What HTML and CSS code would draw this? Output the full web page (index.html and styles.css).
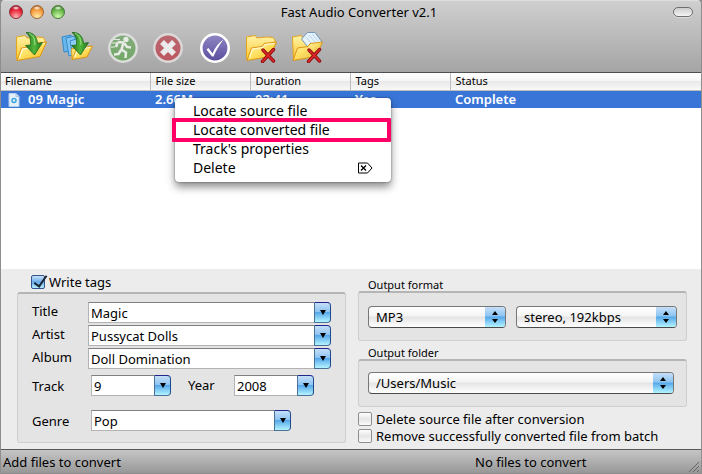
FILE: index.html
```
<!DOCTYPE html>
<html lang="en">
<head>
    <meta charset="UTF-8">
    <meta name="viewport" content="width=device-width, initial-scale=1.0">
    <title>Fast Audio Converter v2.1</title>
    <link rel="stylesheet" href="styles.css">
</head>
<body>
    <svg class="defs" width="0" height="0" aria-hidden="true">
        <defs>
            <linearGradient id="g-back" x1="0" y1="0" x2="0" y2="1">
                <stop offset="0" stop-color="#fff3a8"/><stop offset="1" stop-color="#f9c62c"/>
            </linearGradient>
            <linearGradient id="g-front" x1="0" y1="0" x2="1" y2="1">
                <stop offset="0" stop-color="#fff7b8"/><stop offset="0.5" stop-color="#ffdf5e"/><stop offset="1" stop-color="#f7b714"/>
            </linearGradient>
            <linearGradient id="g-arrow" x1="0" y1="0" x2="1" y2="0">
                <stop offset="0" stop-color="#1f6a1c"/><stop offset="0.5" stop-color="#53b83c"/><stop offset="1" stop-color="#247c1c"/>
            </linearGradient>
            <linearGradient id="g-green" x1="0" y1="0" x2="0" y2="1">
                <stop offset="0" stop-color="#85ab7f"/><stop offset="1" stop-color="#72a866"/>
            </linearGradient>
            <linearGradient id="g-red" x1="0" y1="0" x2="0" y2="1">
                <stop offset="0" stop-color="#b9686f"/><stop offset="1" stop-color="#bd5660"/>
            </linearGradient>
            <linearGradient id="g-violet" x1="0" y1="0" x2="0" y2="1">
                <stop offset="0" stop-color="#8f88c4"/><stop offset="1" stop-color="#5a4c9e"/>
            </linearGradient>
        </defs>
        <symbol id="arrow" viewBox="0 0 32 32">
            <path d="M11 1.5C17 1 22 4.500 22.500 12.500L27.500 11.500L19.500 24L10.500 14.500L15.500 14C16 8 14.500 4 11 1.500Z" fill="url(#g-arrow)" stroke="#1f6a1c" stroke-width="0.800"/>
            <path d="M14 2.500C18 4 20 8 20 14" fill="none" stroke="#a5e08a"/>
        </symbol>
        <symbol id="folder" viewBox="0 0 32 32">
            <path d="M1.500 6L10 4.500L12 7L22 6L28 6.500L30 9V13L4 29L1.500 28Z" fill="url(#g-back)" stroke="#e5a51d"/>
            <path d="M2 29.500L6.500 17L17 15.500L19 12.500L31.500 11L25 25.500Z" fill="url(#g-front)" stroke="#dd9418"/>
            <path d="M4.500 27L7.500 18L18 16.500L20 13.500L29.500 12.500" fill="none" stroke="#fffde0"/>
        </symbol>
        <symbol id="cross" viewBox="0 0 32 32">
            <path d="M18 19L28.500 30M28.500 18.500L17.500 30.500" fill="none" stroke="#8f0d10" stroke-width="3.400" stroke-linecap="round"/>
            <path d="M18 19L28.500 30M28.500 18.500L17.500 30.500" fill="none" stroke="#e02a2a" stroke-width="1.600" stroke-linecap="round"/>
        </symbol>
    </svg>

    <div class="window">
        <header class="top-bar">
            <div class="title-bar">
                <div class="lights">
                    <button class="light red" aria-label="Close"></button>
                    <button class="light orange" aria-label="Minimize"></button>
                    <button class="light green" aria-label="Zoom"></button>
                </div>
                <h1>Fast Audio Converter v2.1</h1>
                <button class="pill" aria-label="Toggle toolbar"></button>
            </div>
            <div class="toolbar">
                <button aria-label="Add files">
                    <svg viewBox="0 0 32 32"><use href="#folder"/><use href="#arrow"/></svg>
                </button>
                <button aria-label="Add folders">
                    <svg viewBox="0 0 32 32">
                        <path d="M1 6L10 4V20L3 21Z" fill="#69b6ec" stroke="#348acb"/>
                        <path d="M5 7L14 5V23L8 25Z" fill="#82c5f3" stroke="#348acb"/>
                        <path d="M9 10L18 7V25L12 27Z" fill="#8fcdf6" stroke="#348acb"/>
                        <path d="M10.500 18L15 17V27L11 28Z" fill="#ffe272" stroke="#dfa01b"/>
                        <path d="M11 28.500L15 19L22 18L24 16L31.500 15L26 26Z" fill="url(#g-front)" stroke="#dd9418"/>
                        <path d="M13.500 26.500L16 20L23 19L25 17L29.500 16.500" fill="none" stroke="#fffde0"/>
                        <use href="#arrow"/>
                    </svg>
                </button>
                <button aria-label="Convert" disabled>
                    <svg viewBox="0 0 32 32">
                        <circle cx="16" cy="17" r="13.700" fill="url(#g-green)" stroke="#dcdedc" stroke-width="2.400"/>
                        <circle cx="19" cy="8.500" r="2.700" fill="#e6ebe4"/>
                        <path d="M10.500 11L16.500 11.500L14.500 18.500L19 21.500L18.500 27M14 19L11.500 23L7 23.500M17.500 12.500L20 16L24 16.500M10.500 11.500L9 16" fill="none" stroke="#e6ebe4" stroke-width="2.600" stroke-linejoin="round"/>
                        <path d="M7 8.500H13M5 12H9M4 16H8" stroke="#e6ebe4" stroke-width="1.200"/>
                    </svg>
                </button>
                <button aria-label="Stop" disabled>
                    <svg viewBox="0 0 32 32">
                        <circle cx="15" cy="17" r="13.700" fill="url(#g-red)" stroke="#dcd8d8" stroke-width="2.400"/>
                        <path d="M9 11L21 23M21 11L9 23" stroke="#ecebeb" stroke-width="5.500"/>
                    </svg>
                </button>
                <button aria-label="Select all">
                    <svg viewBox="0 0 32 32">
                        <circle cx="16" cy="17" r="13.700" fill="url(#g-violet)" stroke="#ffffff" stroke-width="2.600"/>
                        <path d="M7.500 18.500L9.500 17L13.500 22.500C16 16.500 19.500 12 24.500 8.500C20.500 14 17 19 14.500 25.500H13Z" fill="#ffffff"/>
                    </svg>
                </button>
                <button aria-label="Remove file">
                    <svg viewBox="0 0 32 32"><use href="#folder"/><use href="#cross"/></svg>
                </button>
                <button aria-label="Remove all files">
                    <svg viewBox="0 0 32 32">
                        <path d="M1.500 6L10 4.500L12 7L22 6L24 9V13L4 29L2.500 28Z" fill="url(#g-back)" stroke="#e5a51d"/>
                        <path d="M10.500 8L16.500 1.500H24L31 11L20 20Z" fill="#e5f2fa" stroke="#7196bb"/>
                        <path d="M15 6L20 12M18 4L24 11M21 3L27 10" stroke="#b4d3ea"/>
                        <path d="M2 29.500L6.500 17L17 15.500L19 12.500L31.500 11L25 25.500Z" fill="url(#g-front)" fill-opacity="0.900" stroke="#dd9418"/>
                        <use href="#cross"/>
                    </svg>
                </button>
            </div>
        </header>

        <main class="list">
            <table>
                <thead>
                    <tr><th class="name">Filename</th><th>File size</th><th>Duration</th><th>Tags</th><th class="status">Status</th></tr>
                </thead>
                <tbody>
                    <tr>
                        <td>
                            <svg class="file" viewBox="0 0 12 14">
                                <path d="M1 0.500H8L11 3.500V13.500H1Z" fill="#e3f0fa" stroke="#b5d0ec"/>
                                <path d="M8 0.500V3.500H11" fill="none" stroke="#a5c4e5"/>
                                <circle cx="6" cy="7.500" r="2" fill="none" stroke="#3ca5dc" stroke-width="1.500"/>
                            </svg>09 Magic
                        </td>
                        <td>2.66M</td><td>02:41</td><td>Yes</td><td>Complete</td>
                    </tr>
                </tbody>
            </table>
            <div class="menu" role="menu">
                <button role="menuitem">Locate source file</button>
                <button role="menuitem" class="marked">Locate converted file</button>
                <button role="menuitem">Track's properties</button>
                <button role="menuitem">Delete
                    <svg class="del" viewBox="0 0 16 12">
                        <path d="M1.500 1H10.500L15 6L10.500 11H1.500Z" fill="none" stroke="#000"/>
                        <path d="M4 3.500L9 8.500M9 3.500L4 8.500" stroke="#000" stroke-width="1.300"/>
                    </svg>
                </button>
            </div>
        </main>

        <section class="panel">
            <div class="left">
                <label class="check"><input type="checkbox" checked>Write tags</label>
                <div class="box tags">
                    <div class="row">
                        <label for="title">Title</label>
                        <span class="combo"><input id="title" type="text" value="Magic"><button aria-label="Show titles"></button></span>
                    </div>
                    <div class="row">
                        <label for="artist">Artist</label>
                        <span class="combo"><input id="artist" type="text" value="Pussycat Dolls"><button aria-label="Show artists"></button></span>
                    </div>
                    <div class="row">
                        <label for="album">Album</label>
                        <span class="combo"><input id="album" type="text" value="Doll Domination"><button aria-label="Show albums"></button></span>
                    </div>
                    <div class="row short">
                        <label for="track">Track</label>
                        <span class="combo small"><input id="track" type="text" value="9"><button aria-label="Show tracks"></button></span>
                        <label for="year" class="year">Year</label>
                        <span class="combo small"><input id="year" type="text" value="2008"><button aria-label="Show years"></button></span>
                    </div>
                    <div class="row genre">
                        <label for="genre">Genre</label>
                        <span class="combo"><input id="genre" type="text" value="Pop"><button aria-label="Show genres"></button></span>
                    </div>
                </div>
            </div>
            <div class="right">
                <h2>Output format</h2>
                <div class="box format">
                    <span class="popup">
                        <select aria-label="Format"><option>MP3</option></select>
                        <svg viewBox="0 0 20 20"><path d="M7 8L10 4L13 8ZM7 12L10 16L13 12Z"/></svg>
                    </span>
                    <span class="popup quality">
                        <select aria-label="Quality"><option>stereo, 192kbps</option></select>
                        <svg viewBox="0 0 20 20"><path d="M7 8L10 4L13 8ZM7 12L10 16L13 12Z"/></svg>
                    </span>
                </div>
                <h2>Output folder</h2>
                <div class="box folder">
                    <span class="popup">
                        <select aria-label="Folder"><option>/Users/Music</option></select>
                        <svg viewBox="0 0 20 20"><path d="M7 8L10 4L13 8ZM7 12L10 16L13 12Z"/></svg>
                    </span>
                </div>
                <label class="check"><input type="checkbox">Delete source file after conversion</label>
                <label class="check"><input type="checkbox">Remove successfully converted file from batch</label>
            </div>
        </section>

        <footer class="status-bar">
            <span>Add files to convert</span>
            <span>No files to convert</span>
            <svg class="grip" viewBox="0 0 12 12">
                <path d="M1 11L11 1M5 11L11 5M9 11L11 9" stroke="#666"/>
            </svg>
        </footer>
    </div>
</body>
</html>
```
FILE: styles.css
```
* {
    margin: 0;
    padding: 0;
    box-sizing: border-box;
}
body {
    background: #8d8d8d;
    font-family: "Lucida Grande", "Noto Sans", sans-serif;
    font-size: 13px;
    line-height: 18px;
    color: #000;
}
button, input, select {
    font: inherit;
    color: inherit;
    border: none;
    background: none;
}
.defs {
    position: absolute;
}
.window {
    display: flex;
    flex-direction: column;
    min-height: 100vh;
    border: 1px solid #8e8e8e;
    border-top-color: #dedede;
    border-radius: 5px 5px 0 0;
    overflow: hidden;
    background: #ececec;
}

/* title bar and toolbar */
.top-bar {
    height: 72px;
    background: linear-gradient(#cfcfcf, #a5a5a5);
    border-bottom: 1px solid #4f4f4f;
}
.title-bar {
    display: grid;
    grid-template-columns: 1fr auto 1fr;
    align-items: center;
    height: 22px;
    padding: 0 8px;
}
.title-bar h1 {
    padding-left: 16px;
    font-size: 13px;
    font-weight: 400;
}
.lights {
    display: flex;
    gap: 7px;
}
.light {
    width: 14px;
    height: 14px;
    border: 1px solid #777;
    border-radius: 50%;
}
.red {
    background: radial-gradient(ellipse 4px 2px at 6px 2px, #fff, transparent), radial-gradient(circle at 6px 11px, #ffb9b9, #e72034 60%, #8a1420);
    border-color: #8a2f38;
}
.orange {
    background: radial-gradient(ellipse 4px 2px at 6px 2px, #fff, transparent), radial-gradient(circle at 6px 11px, #ffefac, #f5993a 60%, #a0541a);
    border-color: #a0662f;
}
.green {
    background: radial-gradient(ellipse 4px 2px at 6px 2px, #fff, transparent), radial-gradient(circle at 6px 11px, #d3ffac, #65b548 60%, #2d6a20);
    border-color: #4a7a3c;
}
.pill {
    justify-self: end;
    width: 20px;
    height: 10px;
    border: 1px solid #6f6f6f;
    border-radius: 5px;
    background: linear-gradient(#ccc, #f4f4f4);
    box-shadow: 0 1px 0 #ddd;
}
.toolbar {
    display: flex;
    gap: 14px;
    padding: 8px 14px;
}
.toolbar button, .toolbar svg {
    display: block;
    width: 32px;
    height: 32px;
}

/* file list */
.list {
    position: relative;
    flex: 1;
    background: #fff;
}
table {
    width: 100%;
    border-collapse: collapse;
    table-layout: fixed;
}
th, td {
    width: 100px;
    padding: 0 5px;
    text-align: left;
    white-space: nowrap;
}
th {
    height: 17px;
    font-size: 11px;
    font-weight: 400;
    line-height: 16px;
    background: linear-gradient(#fff, #f6f6f6 49%, #e9e9e9 50%, #f8f8f8);
    border-right: 1px solid #bdbdbd;
    border-bottom: 1px solid #bdbdbd;
}
th.name {
    width: 149px;
}
th.status {
    width: auto;
    border-right: none;
}
td {
    height: 18px;
    font-weight: 600;
    line-height: 17px;
    color: #fff;
    background: #3875d7;
}
th:first-child, td:first-child {
    padding-left: 4px;
}
.file {
    width: 12px;
    height: 14px;
    margin: 0 8px 0 3px;
    vertical-align: -3px;
}

/* context menu */
.menu {
    position: absolute;
    top: 25px;
    left: 174px;
    width: 216px;
    padding: 3px 0 5px;
    border-radius: 4px;
    background: #fff;
    box-shadow: 0 5px 9px rgba(0, 0, 0, 0.45), 0 0 2px rgba(0, 0, 0, 0.5);
}
.menu button {
    display: flex;
    align-items: center;
    justify-content: space-between;
    width: 100%;
    height: 19px;
    padding: 0 18px;
    font-size: 14px;
}
.menu .marked {
    position: relative;
}
.marked::after {
    content: "";
    position: absolute;
    inset: -2px 0 -3px -3px;
    border: 4px solid #ff0066;
    border-radius: 1px;
}
.del {
    width: 16px;
    height: 12px;
}

/* settings */
.panel {
    display: grid;
    grid-template-columns: 1fr 1fr;
    gap: 12px;
    padding: 4px 14px 5px 16px;
}
.box {
    border: 1px solid #cfcfcf;
    border-top: 2px solid #b5b5b5;
    border-radius: 3px;
    background: #e4e4e4;
}
.check {
    display: flex;
    align-items: center;
    gap: 4px;
    height: 17px;
}
.check input {
    appearance: none;
    width: 14px;
    height: 14px;
    border: 1px solid #8f8f8f;
    border-radius: 2px;
    background: linear-gradient(#fff, #e6e6e6 50%, #fafafa);
}
.check input:checked {
    position: relative;
    border-color: #33558c;
    background: linear-gradient(#c8e0f8, #67aceb 50%, #b6efff);
}
.check input:checked::after {
    content: "";
    position: absolute;
    top: -3px;
    left: 5px;
    width: 5px;
    height: 12px;
    border: solid #1c2636;
    border-width: 0 2px 2px 0;
    transform: rotate(35deg);
}
.left .check {
    padding-left: 14px;
}
.tags {
    display: flex;
    flex-direction: column;
    gap: 2px;
    margin-top: 2px;
    padding: 8px 13px 11px 14px;
}
.row {
    display: flex;
    width: 299px;
}
.row label {
    width: 56px;
}
.short {
    margin-top: 4px;
}
.short label, .genre label {
    width: 59px;
    padding-top: 2px;
}
.row .year {
    width: 46px;
    margin-left: 17px;
    padding-top: 1px;
}
.genre {
    width: 259px;
    margin-top: 12px;
}
.combo {
    display: flex;
    flex: 1;
    height: 21px;
}
.small {
    flex: none;
    width: 80px;
}
.combo input {
    flex: 1;
    min-width: 0;
    padding: 1px 2px 0;
    border: 1px solid #b3b3b3;
    border-top-color: #808080;
    border-right: none;
    background: #fff;
}
.combo button {
    display: grid;
    place-items: center;
    width: 17px;
    border: 1px solid #4c7199;
    border-top-color: #20268c;
    border-right-color: #204c8c;
    border-radius: 0 4px 4px 0;
    background: linear-gradient(#c5dff7, #8ec4f2 45%, #56a8ea 50%, #b4f4ff);
}
.combo button::after {
    content: "";
    border: 3px solid transparent;
    border-top: 5px solid #000;
    border-bottom: none;
}
.right h2 {
    padding: 5px 0 0 10px;
    font-size: 11px;
    font-weight: 400;
    line-height: 13px;
}
.format, .folder {
    display: flex;
    gap: 10px;
    padding: 13px 9px 12px;
}
.folder {
    margin-bottom: 3px;
    padding: 11px 12px 12px 9px;
}
.popup {
    position: relative;
    flex: 1;
    height: 22px;
    border: 1px solid #777;
    border-bottom-color: #4a4a4a;
    border-radius: 4px;
    background: linear-gradient(#fff, #f4f4f4 45%, #e4e4e4 50%, #fff);
    overflow: hidden;
}
.quality {
    flex: none;
    width: 161px;
}
.popup select {
    appearance: none;
    display: block;
    width: 100%;
    height: 20px;
    padding: 0 24px 0 7px;
}
.popup svg {
    position: absolute;
    top: 0;
    right: 0;
    width: 20px;
    height: 20px;
    background: linear-gradient(#c5dff7, #8ec4f2 45%, #56a8ea 50%, #b4f4ff);
    pointer-events: none;
}

/* status bar */
.status-bar {
    display: grid;
    grid-template-columns: 472px 1fr 12px;
    align-items: center;
    height: 24px;
    padding: 0 1px 0 2px;
    border-top: 1px solid #585858;
    background: linear-gradient(#c6c6c6, #979797);
}
.grip {
    width: 12px;
    height: 12px;
    align-self: end;
}
```
